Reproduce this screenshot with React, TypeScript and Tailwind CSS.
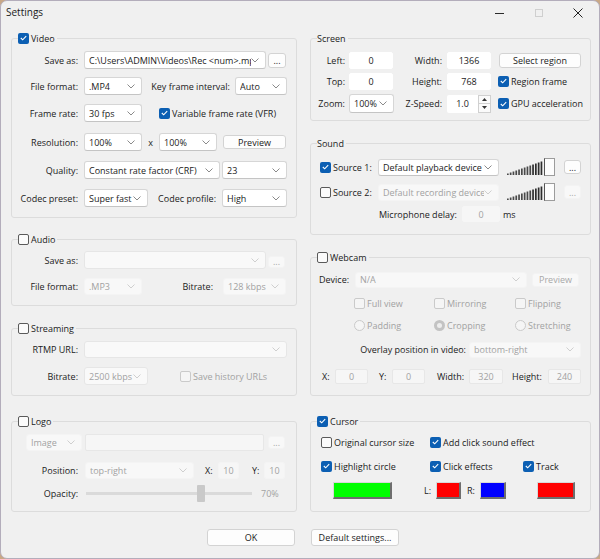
import React from "react";

type P = { cls?: string; children?: React.ReactNode };

function Chevron({ disabled }: { disabled?: boolean }) {
  return (
    <svg width="8" height="5" viewBox="0 0 8 5" className="shrink-0">
      <path d="M0.5 0.5 L4 4 L7.5 0.5" fill="none" stroke={disabled ? "#c9c9c9" : "#7d7d7d"} strokeWidth="0.9" />
    </svg>
  );
}

function Combo({ cls = "", text = "", disabled, flat }: { cls?: string; text?: string; disabled?: boolean; flat?: boolean }) {
  const look = disabled
    ? flat
      ? "bg-[#f8f8f8] text-[#a2a2a2] border border-[#f4f4f4]"
      : "bg-[#f9f9f9] text-[#a2a2a2] border border-[#e6e6e6]"
    : "bg-white text-[#1b1b1b] border border-[#d6d6d6] border-b-[#c4c4c4]";
  return (
    <div className={`flex items-center shrink-0 rounded-[3px] pl-[4px] pr-[6px] ${look} ${cls}`}>
      <span className="flex-1 overflow-hidden whitespace-nowrap">{text}</span>
      <Chevron disabled={disabled} />
    </div>
  );
}

function Field({ cls = "", text = "", disabled, bordered }: { cls?: string; text?: string; disabled?: boolean; bordered?: boolean }) {
  const look = disabled
    ? "bg-[#f6f6f6] text-[#a2a2a2] border border-[#e7e7e7]"
    : bordered
    ? "bg-white text-[#1b1b1b] border border-[#e3e3e3]"
    : "bg-white text-[#1b1b1b] border border-white";
  return (
    <div className={`flex items-center justify-center shrink-0 rounded-[2px] whitespace-nowrap ${look} ${cls}`}>{text}</div>
  );
}

function Btn({ cls = "", children, disabled }: P & { disabled?: boolean }) {
  const look = disabled
    ? "border-[#f3f3f3] bg-[#f8f8f8] text-[#a8a8a8]"
    : "border-[#d3d3d3] bg-[#fdfdfd] text-[#1b1b1b]";
  return (
    <div className={`flex items-center justify-center shrink-0 rounded-[3px] border whitespace-nowrap ${look} ${cls}`}>{children}</div>
  );
}

function Cb({ checked, disabled, cls = "" }: { checked?: boolean; disabled?: boolean; cls?: string }) {
  if (checked)
    return (
      <span className={`flex items-center justify-center w-[11px] h-[11px] rounded-[2px] shrink-0 bg-[#0c5fb3] ${cls}`}>
        <svg width="7" height="6" viewBox="0 0 7 6">
          <path d="M0.8 3 L2.7 4.8 L6.2 1.1" fill="none" stroke="white" strokeWidth="1.1" />
        </svg>
      </span>
    );
  return (
    <span
      className={`w-[11px] h-[11px] rounded-[2px] border shrink-0 ${
        disabled ? "border-[#cacaca] bg-[#f5f5f5]" : "border-[#5a5a5a] bg-[#fbfbfb]"
      } ${cls}`}
    />
  );
}

function Radio({ checked }: { checked?: boolean }) {
  return checked ? (
    <span className="w-[11px] h-[11px] rounded-full bg-[#c3c3c3] flex items-center justify-center shrink-0">
      <span className="w-[5px] h-[5px] rounded-full bg-[#ededed]" />
    </span>
  ) : (
    <span className="w-[11px] h-[11px] rounded-full border border-[#cacaca] bg-[#f5f5f5] shrink-0" />
  );
}

function Lbl({ cls = "", children, dim }: P & { dim?: boolean }) {
  return <span className={`shrink-0 whitespace-nowrap ${dim ? "text-[#a2a2a2]" : ""} ${cls}`}>{children}</span>;
}

function Row({ cls = "", children }: P) {
  return <div className={`flex items-center ${cls}`}>{children}</div>;
}

function Group({ cls = "", legend, children }: P & { legend: React.ReactNode }) {
  return (
    <fieldset className={`min-w-0 border border-[#dcdcdc] rounded-[3px] ${cls}`}>
      <legend className="ml-[6px] pr-[2px]">
        <span className="flex items-center h-[14px] gap-[2px]">{legend}</span>
      </legend>
      {children}
    </fieldset>
  );
}

function Volume() {
  const bars = Array.from({ length: 13 }, (_, i) => i);
  return (
    <svg width="49" height="18" viewBox="0 0 49 18" className="shrink-0">
      {bars.map((i) => {
        const h = 1.5 + i * (12 / 12);
        return <rect key={i} x={1 + i * 2.8} y={17 - h} width={1.7} height={h} fill={i > 8 ? "#2e2e2e" : "#4a4a4a"} />;
      })}
      <rect x="38.5" y="0.5" width="10" height="17" fill="#fdfdfd" stroke="#9c9c9c" strokeWidth="1" />
      <line x1="38.5" y1="0.5" x2="38.5" y2="17.5" stroke="#555" strokeWidth="1" />
    </svg>
  );
}

function Swatch({ cls = "" }: { cls?: string }) {
  return <div className={`shrink-0 border border-t-[#d8d8d8] border-l-[#d8d8d8] border-r-2 border-b-2 border-r-[#6e6e6e] border-b-[#6e6e6e] ${cls}`} />;
}

function Spin() {
  return (
    <div className="ml-[5px] w-[44px] h-[18px] flex items-stretch shrink-0 bg-white rounded-[2px]">
      <span className="flex-1 flex items-center justify-center">1.0</span>
      <div className="w-[13px] flex flex-col border border-[#d0d0d0] bg-[#fafafa]">
        <div className="flex-1 flex items-center justify-center border-b border-[#d0d0d0]">
          <svg width="5" height="3" viewBox="0 0 5 3"><path d="M0 3 L2.5 0 L5 3Z" fill="#333" /></svg>
        </div>
        <div className="flex-1 flex items-center justify-center">
          <svg width="5" height="3" viewBox="0 0 5 3"><path d="M0 0 L2.5 3 L5 0Z" fill="#333" /></svg>
        </div>
      </div>
    </div>
  );
}

export default function App() {
  return (
    <div className="w-[600px] h-[559px] bg-[#c9a886] font-['Open_Sans',sans-serif] text-[9px] leading-[13px] text-[#1b1b1b]">
      <div className="w-[600px] h-[559px] bg-[#f0f0f0] rounded-[7px] border border-[#b3adbb] flex flex-col overflow-hidden">
        {/* title bar */}
        <div className="h-[30px] flex shrink-0">
          <div className="pl-[5px] pt-[5px] text-[10px]">Settings</div>
          <div className="ml-auto flex pr-[2px]">
            <div className="w-[39px] h-[24px] flex items-center justify-center">
              <span className="w-[9px] h-[1px] bg-[#2a2a2a]" />
            </div>
            <div className="w-[39px] h-[24px] flex items-center justify-center">
              <span className="w-[8px] h-[8px] border border-[#cfcfcf]" />
            </div>
            <div className="w-[39px] h-[24px] flex items-center justify-center">
              <svg width="10" height="10" viewBox="0 0 10 10">
                <path d="M0.5 0.5 L9.5 9.5 M9.5 0.5 L0.5 9.5" stroke="#222" strokeWidth="1" />
              </svg>
            </div>
          </div>
        </div>

        {/* body */}
        <div className="flex pl-[10px]">
          {/* left column */}
          <div className="w-[286px] flex flex-col shrink-0">
            <Group cls="h-[187px]" legend={<><Cb checked /><span>Video</span></>}>
              <Row cls="mt-[6px] h-[18px]">
                <Lbl cls="w-[66px] text-right">Save as:</Lbl>
                <Combo cls="ml-[6px] w-[182px] h-[18px]" text="C:\Users\ADMIN\Videos\Rec <num>.mp4" />
                <Btn cls="ml-[2px] w-[18px] h-[15px]">...</Btn>
              </Row>
              <Row cls="mt-[8px] h-[18px]">
                <Lbl cls="w-[66px] text-right">File format:</Lbl>
                <Combo cls="ml-[6px] w-[58px] h-[18px]" text=".MP4" />
                <Lbl cls="w-[88px] text-right">Key frame interval:</Lbl>
                <Combo cls="ml-[5px] w-[52px] h-[18px]" text="Auto" />
              </Row>
              <Row cls="mt-[9px] h-[18px]">
                <Lbl cls="w-[66px] text-right">Frame rate:</Lbl>
                <Combo cls="ml-[6px] w-[58px] h-[18px]" text="30 fps" />
                <Cb checked cls="ml-[17px]" />
                <Lbl cls="ml-[2px]">Variable frame rate (VFR)</Lbl>
              </Row>
              <Row cls="mt-[11px] h-[18px]">
                <Lbl cls="w-[66px] text-right">Resolution:</Lbl>
                <Combo cls="ml-[6px] w-[58px] h-[18px]" text="100%" />
                <Lbl cls="w-[17px] text-center">x</Lbl>
                <Combo cls="w-[58px] h-[18px]" text="100%" />
                <Btn cls="ml-[6px] w-[63px] h-[14px]">Preview</Btn>
              </Row>
              <Row cls="mt-[10px] h-[18px]">
                <Lbl cls="w-[66px] text-right">Quality:</Lbl>
                <Combo cls="ml-[6px] w-[136px] h-[18px]" text="Constant rate factor (CRF)" />
                <Combo cls="ml-[2px] w-[65px] h-[18px]" text="23" />
              </Row>
              <Row cls="mt-[10px] h-[18px]">
                <Lbl cls="w-[66px] text-right">Codec preset:</Lbl>
                <Combo cls="ml-[6px] w-[64px] h-[18px]" text="Super fast" />
                <Lbl cls="w-[68px] text-right">Codec profile:</Lbl>
                <Combo cls="ml-[6px] w-[65px] h-[18px]" text="High" />
              </Row>
            </Group>

            <Group cls="mt-[14px] h-[74px]" legend={<><Cb /><span>Audio</span></>}>
              <Row cls="mt-[5px] h-[18px]">
                <Lbl cls="w-[66px] text-right">Save as:</Lbl>
                <Combo disabled cls="ml-[6px] w-[182px] h-[18px]" />
                <Btn disabled cls="ml-[2px] w-[17px] h-[12px] mt-[3px]">...</Btn>
              </Row>
              <Row cls="mt-[8px] h-[18px]">
                <Lbl cls="w-[66px] text-right">File format:</Lbl>
                <Combo disabled flat cls="ml-[6px] w-[58px] h-[17px]" text=".MP3" />
                <Lbl cls="w-[71px] text-right">Bitrate:</Lbl>
                <Combo disabled flat cls="ml-[10px] w-[63px] h-[17px]" text="128 kbps" />
              </Row>
            </Group>

            <Group cls="mt-[15px] h-[75px]" legend={<><Cb /><span>Streaming</span></>}>
              <Row cls="mt-[5px] h-[18px]">
                <Lbl cls="w-[66px] text-right">RTMP URL:</Lbl>
                <Combo disabled cls="ml-[6px] w-[203px] h-[17px]" />
              </Row>
              <Row cls="mt-[9px] h-[18px]">
                <Lbl cls="w-[66px] text-right">Bitrate:</Lbl>
                <Combo disabled cls="ml-[6px] w-[64px] h-[18px]" text="2500 kbps" />
                <Cb disabled cls="ml-[32px]" />
                <Lbl dim cls="ml-[2px]">Save history URLs</Lbl>
              </Row>
            </Group>

            <Group cls="mt-[18px] h-[98px]" legend={<><Cb /><span>Logo</span></>}>
              <Row cls="mt-[6px] h-[17px]">
                <Combo disabled flat cls="ml-[14px] w-[56px] h-[17px]" text="Image" />
                <Field disabled cls="ml-[3px] w-[179px] h-[17px]" />
                <Btn disabled cls="ml-[4px] w-[17px] h-[13px]">...</Btn>
              </Row>
              <Row cls="mt-[11px] h-[17px]">
                <Lbl cls="w-[66px] text-right">Position:</Lbl>
                <Combo disabled flat cls="ml-[7px] w-[109px] h-[17px]" text="top-right" />
                <Lbl cls="ml-[11px] w-[13px]">X:</Lbl>
                <Field disabled cls="w-[21px] h-[17px] border-[#f4f4f4]" text="10" />
                <Lbl cls="ml-[13px] w-[12px]">Y:</Lbl>
                <Field disabled cls="w-[21px] h-[17px] border-[#f4f4f4]" text="10" />
              </Row>
              <Row cls="mt-[6px] h-[17px]">
                <Lbl cls="w-[66px] text-right">Opacity:</Lbl>
                <div className="ml-[8px] w-[166px] h-[17px] flex items-center shrink-0">
                  <div className="w-[111px] h-[3px] bg-[#dadada]" />
                  <div className="w-[8px] h-[17px] bg-[#c9c9c9] rounded-[1px]" />
                  <div className="w-[47px] h-[3px] bg-[#dadada]" />
                </div>
                <Lbl dim cls="ml-[9px]">70%</Lbl>
              </Row>
            </Group>
          </div>

          {/* right column */}
          <div className="ml-[13px] w-[281px] flex flex-col shrink-0">
            <Group cls="h-[90px]" legend={<span>Screen</span>}>
              <Row cls="mt-[6px] h-[18px]">
                <Lbl cls="w-[34px] text-right">Left:</Lbl>
                <Field cls="ml-[4px] w-[44px] h-[17px]" text="0" />
                <Lbl cls="w-[49px] text-right">Width:</Lbl>
                <Field cls="ml-[5px] w-[44px] h-[17px]" text="1366" />
                <Btn cls="ml-[8px] w-[82px] h-[15px]">Select region</Btn>
              </Row>
              <Row cls="mt-[3px] h-[18px]">
                <Lbl cls="w-[34px] text-right">Top:</Lbl>
                <Field cls="ml-[4px] w-[44px] h-[17px]" text="0" />
                <Lbl cls="w-[49px] text-right">Height:</Lbl>
                <Field cls="ml-[5px] w-[44px] h-[17px]" text="768" />
                <Cb checked cls="ml-[7px]" />
                <Lbl cls="ml-[2px]">Region frame</Lbl>
              </Row>
              <Row cls="mt-[4px] h-[19px]">
                <Lbl cls="w-[34px] text-right">Zoom:</Lbl>
                <Combo cls="ml-[4px] w-[45px] h-[19px]" text="100%" />
                <Lbl cls="w-[48px] text-right">Z-Speed:</Lbl>
                <Spin />
                <Cb checked cls="ml-[7px]" />
                <Lbl cls="ml-[2px]">GPU acceleration</Lbl>
              </Row>
            </Group>

            <Group cls="mt-[15px] h-[99px]" legend={<span>Sound</span>}>
              <Row cls="mt-[8px] h-[18px]">
                <Cb checked cls="ml-[9px]" />
                <Lbl cls="ml-[2px] w-[45px]">Source 1:</Lbl>
                <Combo cls="w-[121px] h-[17px]" text="Default playback device" />
                <div className="ml-[7px]"><Volume /></div>
                <Btn cls="ml-[9px] w-[17px] h-[14px]">...</Btn>
              </Row>
              <Row cls="mt-[7px] h-[18px]">
                <Cb cls="ml-[9px]" />
                <Lbl cls="ml-[2px] w-[45px]">Source 2:</Lbl>
                <Combo disabled flat cls="w-[121px] h-[17px]" text="Default recording device" />
                <div className="ml-[7px]"><Volume /></div>
                <Btn disabled cls="ml-[9px] w-[17px] h-[14px]">...</Btn>
              </Row>
              <Row cls="mt-[5px] h-[16px]">
                <Lbl cls="ml-[68px] w-[83px]">Microphone delay:</Lbl>
                <Field disabled cls="w-[38px] h-[16px] border-[#f6f6f6]" text="0" />
                <Lbl cls="ml-[3px]">ms</Lbl>
              </Row>
            </Group>

            <Group cls="mt-[15px] h-[146px]" legend={<><Cb /><span>Webcam</span></>}>
              <Row cls="mt-[7px] h-[17px]">
                <Lbl cls="ml-[8px] w-[36px]">Device:</Lbl>
                <Combo disabled flat cls="w-[172px] h-[16px]" text="N/A" />
                <Btn disabled cls="ml-[5px] w-[47px] h-[14px]">Preview</Btn>
              </Row>
              <Row cls="mt-[8px] h-[15px]">
                <div className="ml-[43px] w-[80px] flex items-center gap-[2px]"><Cb disabled /><Lbl dim>Full view</Lbl></div>
                <div className="w-[81px] flex items-center gap-[2px]"><Cb disabled /><Lbl dim>Mirroring</Lbl></div>
                <div className="flex items-center gap-[2px]"><Cb disabled /><Lbl dim>Flipping</Lbl></div>
              </Row>
              <Row cls="mt-[7px] h-[15px]">
                <div className="ml-[43px] w-[80px] flex items-center gap-[2px]"><Radio /><Lbl dim>Padding</Lbl></div>
                <div className="w-[81px] flex items-center gap-[2px]"><Radio checked /><Lbl dim>Cropping</Lbl></div>
                <div className="flex items-center gap-[2px]"><Radio /><Lbl dim>Stretching</Lbl></div>
              </Row>
              <Row cls="mt-[8px] h-[17px]">
                <Lbl cls="ml-[48px] w-[107px] text-right">Overlay position in video:</Lbl>
                <Combo disabled flat cls="ml-[3px] w-[112px] h-[16px]" text="bottom-right" />
              </Row>
              <Row cls="mt-[10px] h-[17px]">
                <Lbl cls="ml-[11px] w-[13px]">X:</Lbl>
                <Field disabled cls="w-[33px] h-[15px]" text="0" />
                <Lbl cls="ml-[11px] w-[13px]">Y:</Lbl>
                <Field disabled cls="w-[33px] h-[15px]" text="0" />
                <Lbl cls="ml-[12px] w-[32px]">Width:</Lbl>
                <Field disabled cls="w-[34px] h-[15px]" text="320" />
                <Lbl cls="ml-[9px] w-[36px]">Height:</Lbl>
                <Field disabled cls="w-[33px] h-[15px]" text="240" />
              </Row>
            </Group>

            <Group cls="mt-[18px] h-[98px]" legend={<><Cb checked /><span>Cursor</span></>}>
              <Row cls="mt-[6px] h-[16px]">
                <div className="ml-[10px] w-[109px] flex items-center gap-[2px]"><Cb /><Lbl>Original cursor size</Lbl></div>
                <div className="flex items-center gap-[2px]"><Cb checked /><Lbl>Add click sound effect</Lbl></div>
              </Row>
              <Row cls="mt-[8px] h-[16px]">
                <div className="ml-[10px] w-[109px] flex items-center gap-[2px]"><Cb checked /><Lbl>Highlight circle</Lbl></div>
                <div className="w-[93px] flex items-center gap-[2px]"><Cb checked /><Lbl>Click effects</Lbl></div>
                <div className="flex items-center gap-[2px]"><Cb checked /><Lbl>Track</Lbl></div>
              </Row>
              <Row cls="mt-[8px] h-[17px]">
                <Swatch cls="ml-[22px] w-[59px] h-[17px] bg-[#00ff00]" />
                <Lbl cls="ml-[32px] w-[12px]">L:</Lbl>
                <Swatch cls="w-[25px] h-[17px] bg-[#ff0000]" />
                <Lbl cls="ml-[6px] w-[13px]">R:</Lbl>
                <Swatch cls="w-[26px] h-[17px] bg-[#0000ff]" />
                <Swatch cls="ml-[31px] w-[38px] h-[17px] bg-[#ff0000]" />
              </Row>
            </Group>
          </div>
        </div>

        {/* buttons */}
        <div className="mt-[17px] flex justify-center gap-[16px] pl-[6px]">
          <Btn cls="w-[88px] h-[17px]">OK</Btn>
          <Btn cls="w-[88px] h-[17px]">Default settings...</Btn>
        </div>
      </div>
    </div>
  );
}
